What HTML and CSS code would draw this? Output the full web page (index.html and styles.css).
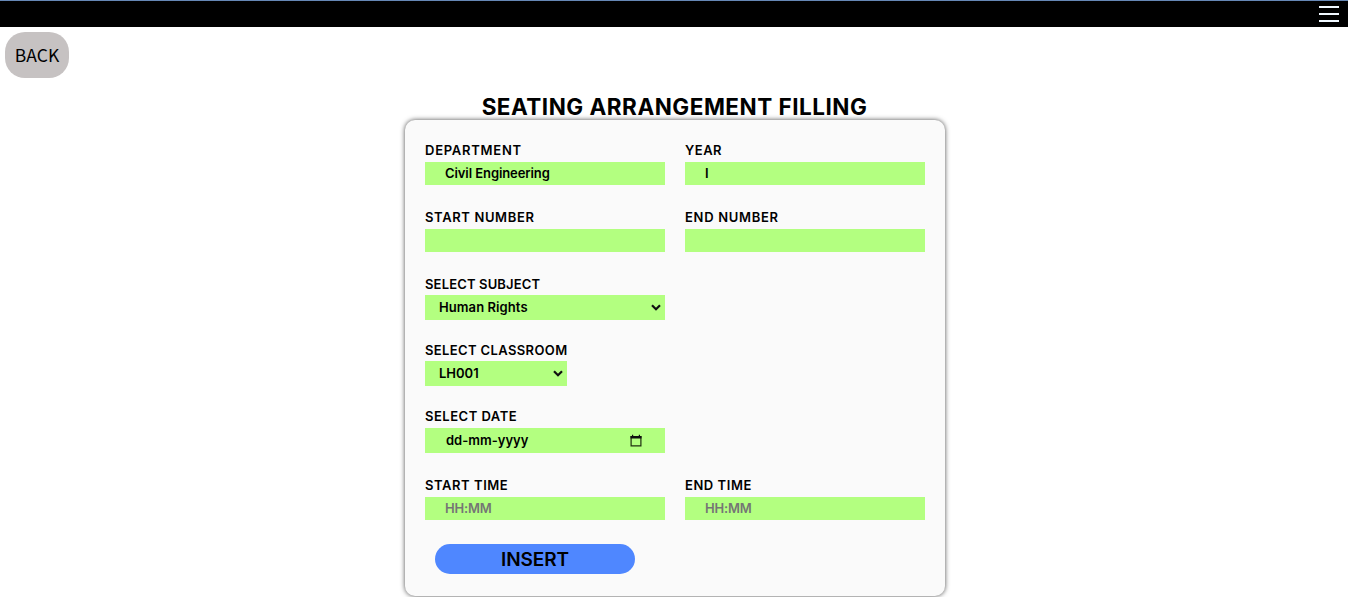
FILE: index.html
```html
<!DOCTYPE html>
<html lang="en">
<head>
<meta charset="utf-8">
<title>Seating Arrangement</title>
<link rel="stylesheet" href="styles.css">
</head>
<body>
<header class="topbar">
  <div class="menu"><span></span><span></span><span></span></div>
</header>
<main class="page">
  <button class="back">BACK</button>
  <h1 class="title">SEATING ARRANGEMENT FILLING</h1>
  <form class="card">
    <div class="field"><label class="w-department">DEPARTMENT</label><input class="w-civil" value="Civil Engineering"></div>
    <div class="field"><label class="w-year">YEAR</label><input value="I"></div>
    <div class="field"><label class="w-startnum">START NUMBER</label><input></div>
    <div class="field"><label class="w-endnum">END NUMBER</label><input></div>
    <div class="field wide"><label class="w-subject">SELECT SUBJECT</label>
      <div class="select"><span class="w-human">Human Rights</span><svg width="10" height="7" viewBox="0 0 10 7"><path d="M1 1.2 5 5.2 9 1.2" fill="none" stroke="#101010" stroke-width="2.2"/></svg></div></div>
    <div class="field wide"><label class="w-classroom">SELECT CLASSROOM</label>
      <div class="select short"><span>LH001</span><svg width="10" height="7" viewBox="0 0 10 7"><path d="M1 1.2 5 5.2 9 1.2" fill="none" stroke="#101010" stroke-width="2.2"/></svg></div></div>
    <div class="field wide"><label class="w-date">SELECT DATE</label>
      <div class="date"><span>dd-mm-yyyy</span><svg width="12" height="13" viewBox="0 0 12 13"><path d="M1.100 2.500h9.800v9.400H1.100z" fill="none" stroke="#203010" stroke-width="1.2"/><path d="M.5 2h11v2.500H.5zM2 .7h1.200V2H2zM8.800.7H10V2H8.800z" fill="#101010"/></svg></div></div>
    <div class="field"><label class="w-starttime">START TIME</label><input class="w-time" placeholder="HH:MM"></div>
    <div class="field"><label class="w-endtime">END TIME</label><input class="w-time" placeholder="HH:MM"></div>
    <button class="insert" type="button">INSERT</button>
  </form>
</main>
</body>
</html>
```
FILE: styles.css
```css
* { box-sizing: border-box; }
body { margin: 0; height: 597px; overflow: hidden; background: #fff; color: #000; font-family: Inter, "Liberation Sans", sans-serif; }
button, input { font-family: inherit; border: 0; color: #000; outline: 0; }
.topbar { height: 27px; background: #000; border-top: 1px solid #6687b5; display: flex; justify-content: flex-end; padding: 5px 9px 0 0; }
.menu { width: 20px; display: flex; flex-direction: column; gap: 5px; }
.menu span { height: 2px; background: #f0f8ff; }
.page { display: flex; flex-direction: column; align-items: center; padding-top: 5px; }
.back { align-self: flex-start; margin-left: 5px; width: 64px; height: 46px; border-radius: 20px; background: #c6c2c2; font: 17.5px/46px "Noto Sans CJK JP", "Noto Sans", sans-serif; padding: 0; }
.title { margin: 15px 0 0 1px; height: 27px; font-size: 22.5px; line-height: 28px; font-weight: 650; white-space: nowrap; letter-spacing: 0.5px; }
.card { margin-left: 2px; width: 540px; height: 476px; padding: 22px 20px 0; background: #fafafa; border-radius: 10px; box-shadow: 0 0 5px #000000b3; display: grid; grid-template-columns: 240px 240px; column-gap: 20px; grid-template-rows: 67px 67px 66px 66px 69px 67px 30px; }
.field { display: flex; flex-direction: column; align-items: flex-start; }
.wide { grid-column: 1 / 3; }
label { height: 16px; font-size: 13px; line-height: 17px; font-weight: 600; white-space: nowrap; }
input { margin-top: 4px; width: 240px; height: 23px; padding: 0 20px 2px; background: #b3ff80; font-size: 13px; font-weight: 600; }
input::placeholder { color: #757575; opacity: 1; }
.select, .date { display: flex; align-items: center; justify-content: space-between; width: 240px; height: 25px; background: #b3ff80; font-size: 13px; font-weight: 600; white-space: nowrap; }
.select { margin-top: 3px; padding: 0 4px 0 14px; }
.select span, .date span { padding-bottom: 2px; }
.short { width: 142px; }
.date { margin-top: 4px; padding: 0 23px 0 21px; }
.insert { margin: 0 0 0 10px; width: 200px; height: 30px; border-radius: 15px; background: #4f87ff; font-size: 19px; font-weight: 600; padding: 0; letter-spacing: -0.1px; }
.w-department { letter-spacing: 0.75px; }
.w-year { letter-spacing: 0.5px; }
.w-startnum { letter-spacing: 0.62px; }
.w-endnum { letter-spacing: 0.7px; }
.w-subject { letter-spacing: 0.15px; }
.w-classroom { letter-spacing: 0.37px; }
.w-date { letter-spacing: 0.5px; }
.w-starttime, .w-endtime { letter-spacing: 0.55px; }
.w-civil { letter-spacing: -0.08px; }
.w-human { letter-spacing: 0.08px; }
.w-time { letter-spacing: -0.2px; }
```
